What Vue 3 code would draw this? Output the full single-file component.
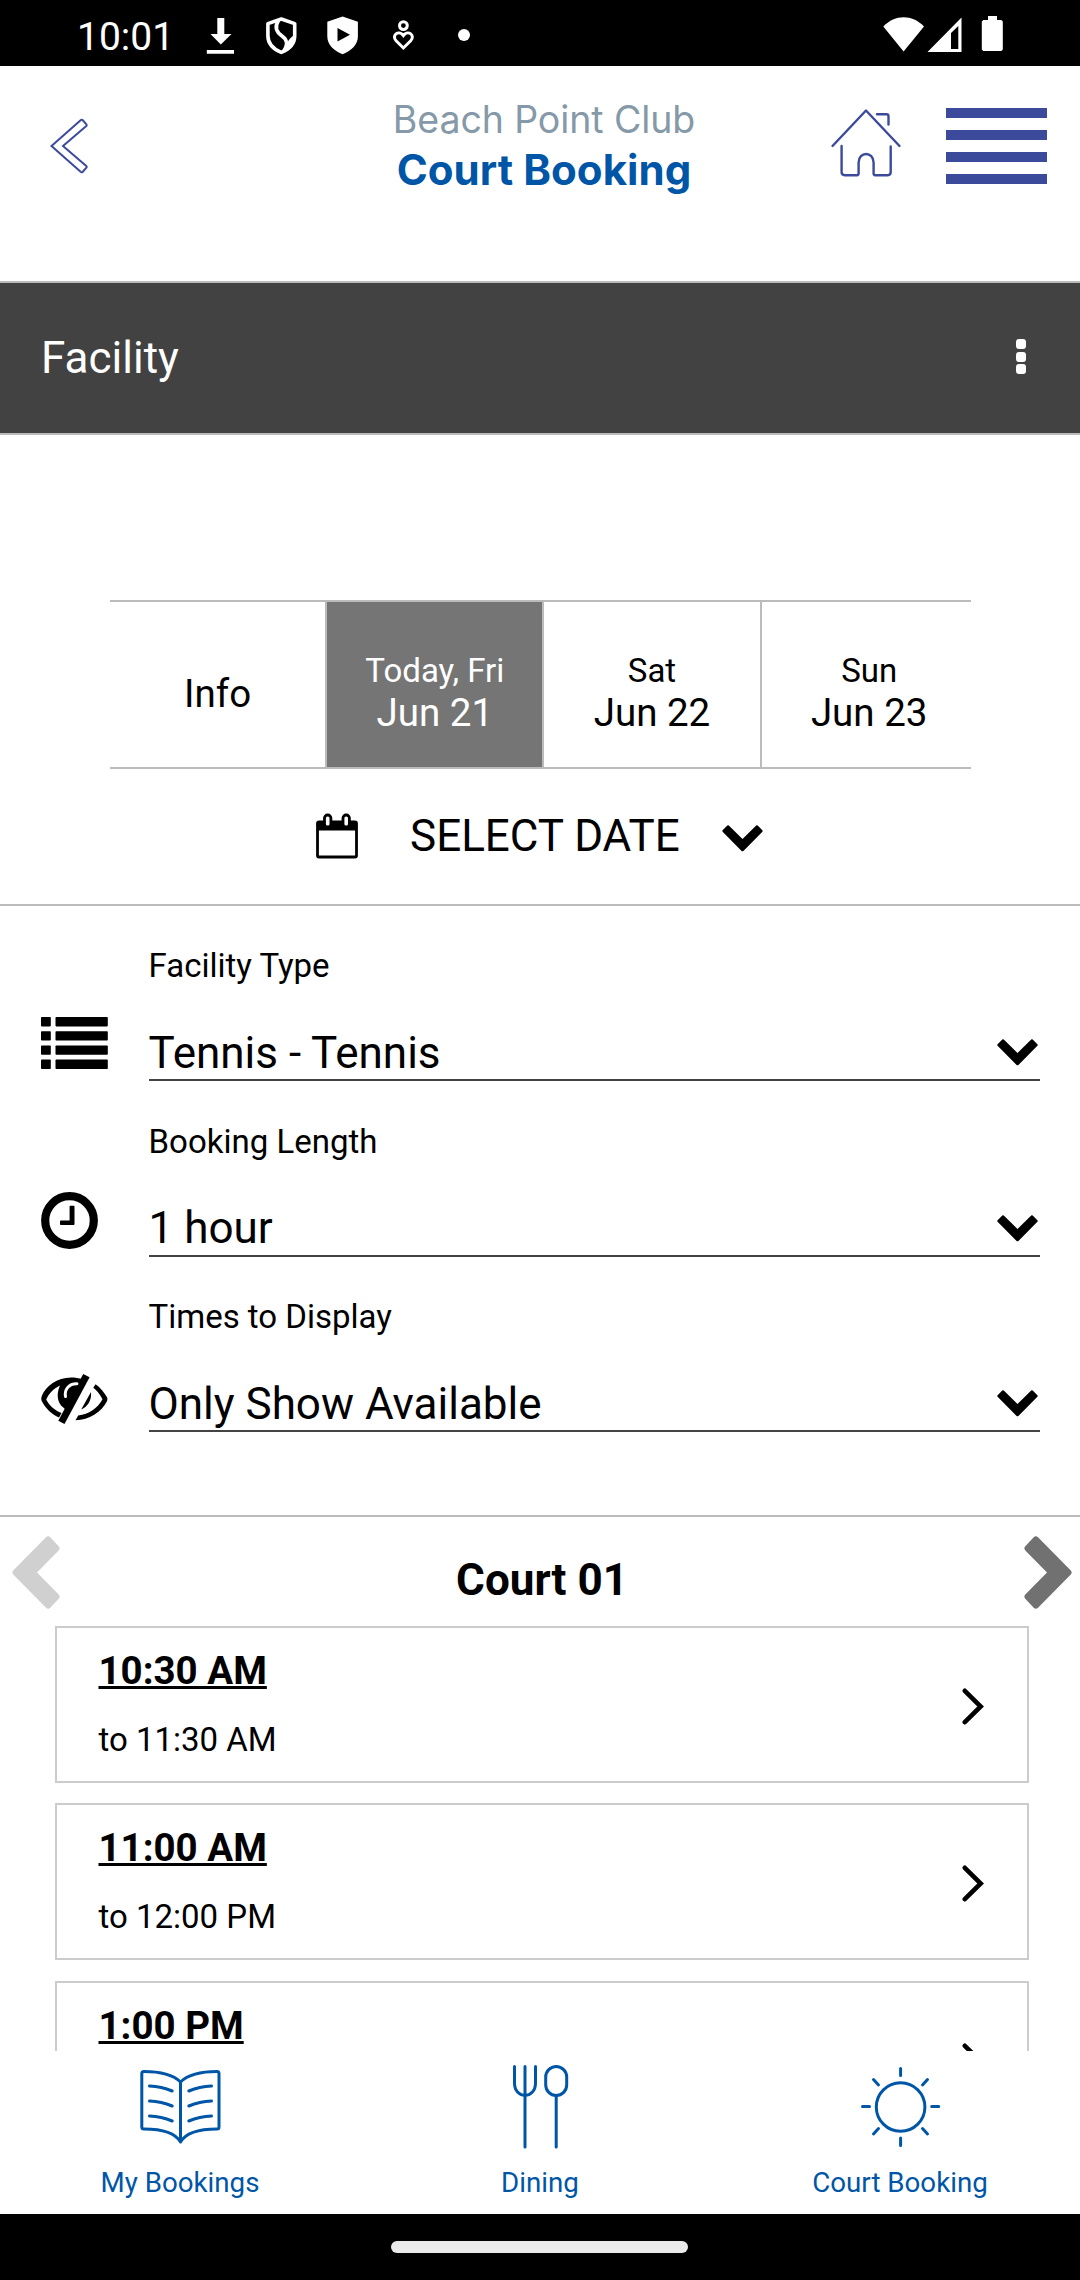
<template>
  <div class="phone">
    <div class="status">
      <span class="time">10:01</span>
      <svg class="status-left" width="280" height="66" viewBox="200 0 280 66" fill="#fff">
        <path d="M217.3 18h7v16h7.2l-10.7 10.4L210.5 34h6.8zM206.8 50h27.2v3.8h-27.2z" />
        <g fill="none" stroke="#fff" stroke-width="3.6" stroke-linejoin="round">
          <path d="M281.3 19l13.4 4.6v12.2c0 7.4-5.4 13.4-13.4 16.6-8-3.2-13.4-9.2-13.4-16.6V23.6z" />
          <path d="M278.5 20.500c-4.500 7-1.500 12 3.500 15.500 5 3.500 6.500 8 1.500 15.500M289.500 46.500c-1-4 .5-6 4.500-9" />
        </g>
        <path fill-rule="evenodd" d="M342.6 16.500l15.300 5.300v14.400c0 8-6 14.400-15.300 18-9.300-3.600-15.300-10-15.300-18V21.800zM337.500 28v13.500l12.500-6.800z" />
        <g fill="none" stroke="#fff" stroke-width="3">
          <circle cx="403.4" cy="25.6" r="3.9" />
          <path d="M403.4 48l-7.300-7.200c-5-5.300 2.500-11.300 7.300-5.300 4.800-6 12.300 0 7.300 5.300z" />
        </g>
        <circle cx="464" cy="35" r="6" />
      </svg>
      <svg class="status-right" width="125" height="66" viewBox="880 0 125 66" fill="#fff">
        <path d="M883.3 26.500c12-12.300 28.700-12.300 40.700 0L903.600 51.500z" />
        <path fill-rule="evenodd" d="M961.5 17.500V52h-34zM951 33v16h7.300V26z" />
        <path d="M988 16h9v4h4.300l1.500 1.500v28L1001.300 51h-18l-1.500-1.500v-28l1.500-1.500h4.700z" />
      </svg>
    </div>

    <header class="header">
      <svg class="back" width="40" height="58" viewBox="0 0 40 58">
        <path d="M2.500 29L31.600 3.300q1.200-1 2.200 0l3.400 3.800q1 1.200-.2 2.200L14 29l23 19.700q1.200 1 .2 2.200l-3.400 3.800q-1 1-2.200 0z" />
      </svg>
      <div class="titles">
        <div class="club">Beach Point Club</div>
        <div class="page-name">Court Booking</div>
      </div>
      <svg class="home" width="72" height="70" viewBox="0 0 72 70">
        <path d="M2.500 41.500L36 6l33.500 35.500M47 9.700h9.500q2 0 2 2V20M11.600 41.500v26q0 3.200 3.200 3.200H27q1.600 0 1.600-1.600v-11c0-11.500 15-11.500 15 0v11q0 1.600 1.600 1.600h12.500q3 0 3-3.200V42" transform="translate(0 -2.500)" />
      </svg>
      <div class="burger"><i v-for="n in 4" :key="n"></i></div>
    </header>

    <div class="facility">
      <span>Facility</span>
      <div class="dots"><i v-for="n in 3" :key="n"></i></div>
    </div>

    <section class="dates">
      <div class="tabs">
        <div v-for="tab in tabs" :key="tab.date" class="tab" :class="{ active: tab.active }">
          <span v-if="tab.day" class="day">{{ tab.day }}</span>
          <span class="date">{{ tab.date }}</span>
        </div>
      </div>
      <div class="select-date">
        <svg width="42" height="46" viewBox="0 0 42 46">
          <rect x="1.5" y="9" width="39" height="35" rx="1.5" fill="none" stroke="#000" stroke-width="2.8" />
          <path d="M1 9h40v8.500H1z" />
          <rect x="8.5" y="2" width="6.4" height="12" rx="3" fill="#fff" stroke="#000" stroke-width="2.8" />
          <rect x="27" y="2" width="6.4" height="12" rx="3" fill="#fff" stroke="#000" stroke-width="2.8" />
        </svg>
        <span>SELECT DATE</span>
        <svg class="select-chevron" width="41" height="27" viewBox="0 0 41 27"><path :d="chevron" /></svg>
      </div>
    </section>

    <section class="form">
      <div v-for="field in fields" :key="field.label" class="field">
        <div class="field-icon">
          <svg v-if="field.icon === 'list'" class="icon-list" width="67" height="52" viewBox="0 0 67 52">
            <template v-for="n in 4" :key="n">
              <rect x="0" :y="(n - 1) * 14.2" width="9.8" height="9.4" rx=".8" />
              <rect x="14.5" :y="(n - 1) * 14.2" width="52.3" height="9.4" rx=".8" />
            </template>
          </svg>
          <svg v-else-if="field.icon === 'clock'" class="icon-clock" width="57" height="57" viewBox="0 0 57 57">
            <circle cx="28.5" cy="28.5" r="24.3" fill="none" stroke="#000" stroke-width="8.2" />
            <path d="M28.6 14.500q0-.8.8-.8h3.300q.8 0 .8.800V32q0 1-1 1H19.800q-.8 0-.8-.8v-2.800q0-.8.800-.8h8.800z" />
          </svg>
          <svg v-else class="icon-eye" width="67" height="50" viewBox="0 0 67 50">
            <path d="M42 5.500C22-1 6 10 1 21.500q-1.500 3.500 0 6C5 35 11 40.500 18 43.500l2.500-4.500C14 36.500 8.500 32 5.200 25.500 8 19 13 14.500 19 11.500c-3 7-3.500 14 1 20l4 3.500z" />
            <path d="M42.200 0l6.400 3.200L23.500 50l-6.200-3.200z" />
            <path d="M36 9.700C27.500 9.500 23.200 16 24.500 22.500" fill="none" stroke="#fff" stroke-width="3" stroke-linecap="round" />
            <path d="M54.500 10.300C59 13.300 63 18 66 23.300q1 2 0 4C60 38.500 48.500 46 34.500 46.300l2.700-4.700C48 40.300 56.500 34.500 61.500 25.300 59 20.500 56 16.500 52.300 13.800zM50 18c.8 8-3 14.500-9.800 17.500z" />
          </svg>
        </div>
        <div class="field-body">
          <div class="label">{{ field.label }}</div>
          <div class="value">
            <span>{{ field.value }}</span>
            <svg width="41" height="27" viewBox="0 0 41 27"><path :d="chevron" /></svg>
          </div>
        </div>
      </div>
    </section>

    <section class="courts">
      <div class="court-head">
        <svg class="prev" width="48" height="73" viewBox="0 0 48 73"><path :d="arrow" transform="matrix(-1 0 0 1 48 0)" /></svg>
        <h2>Court 01</h2>
        <svg class="next" width="48" height="73" viewBox="0 0 48 73"><path :d="arrow" /></svg>
      </div>
      <div class="slots">
        <article v-for="slot in slots" :key="slot.start" class="slot">
          <div>
            <div class="start">{{ slot.start }}</div>
            <div v-if="slot.end" class="end">to {{ slot.end }}</div>
          </div>
          <svg width="22" height="37" viewBox="0 0 22 37">
            <path d="M2.800 2.800L18.700 18.500 2.800 34.200" fill="none" stroke="#000" stroke-width="4.6" stroke-linecap="round" />
          </svg>
        </article>
      </div>
    </section>

    <nav class="bottom-nav">
      <a class="nav-item">
        <svg width="84" height="90" viewBox="138 2063 84 90">
          <path d="M180.500 2142V2082C172 2074 157 2071.600 144 2071.600q-2.200 0-2.200 2.200V2127q0 2 2.200 2c17 0 31 3.500 36.500 13 5.500-9.500 19.500-13 36.500-13q2 0 2-2v-53.200q0-2.200-2-2.200c-13 0-28 2.400-36.500 10.400" />
          <path d="M149.500 2086q12 .5 22.700 5M149.500 2101q12 .5 22.700 5M149.500 2116q12 .5 22.700 5M211.500 2086q-12 .5-22.700 5M211.500 2101q-12 .5-22.700 5M211.500 2116q-12 .5-22.700 5" />
        </svg>
        <span>My Bookings</span>
      </a>
      <a class="nav-item">
        <svg width="84" height="90" viewBox="498 2063 84 90">
          <path d="M514.500 2066.500V2083c0 16.500 21 16.500 21 0v-16.500M525 2066.500V2147M556.200 2095.500V2147" />
          <rect x="545.7" y="2066.5" width="21" height="29" rx="10.5" />
        </svg>
        <span>Dining</span>
      </a>
      <a class="nav-item">
        <svg width="84" height="90" viewBox="858 2063 84 90">
          <circle cx="900.6" cy="2107" r="24.3" />
          <path d="M900.600 2068.500v7M900.600 2138v7.500M862.500 2106.500h7M931.700 2106.500h7M873.500 2079.500l5 5.500M927.500 2079.500l-5 5.500M873.500 2134l5-5.500M927.500 2134l-5-5.500" />
        </svg>
        <span>Court Booking</span>
      </a>
    </nav>

    <div class="gesture"><i></i></div>
  </div>
</template>

<script setup>
import { ref } from 'vue'

const chevron = 'M.6 6.800Q0 6 .6 5.300L5.300.6Q6 0 6.800.6L20.500 14 34.200.6Q35 0 35.700.6l4.700 4.700q.6.700 0 1.500L21.400 25.900q-.9.800-1.800 0z'
const arrow = 'M1.300 14.500Q-.6 12.300 1.300 10.200L9.700 1.300Q11.800-.6 14 1.300L46.800 34.500Q48.500 36.500 46.800 38.500L14 71.700Q11.800 73.600 9.700 71.700L1.300 62.800Q-.6 60.700 1.300 58.500L23 36.500z'

const tabs = ref([
  { date: 'Info' },
  { day: 'Today, Fri', date: 'Jun 21', active: true },
  { day: 'Sat', date: 'Jun 22' },
  { day: 'Sun', date: 'Jun 23' },
])

const fields = ref([
  { icon: 'list', label: 'Facility Type', value: 'Tennis - Tennis' },
  { icon: 'clock', label: 'Booking Length', value: '1 hour' },
  { icon: 'eye', label: 'Times to Display', value: 'Only Show Available' },
])

const slots = ref([
  { start: '10:30 AM', end: '11:30 AM' },
  { start: '11:00 AM', end: '12:00 PM' },
  { start: '1:00 PM' },
])
</script>

<style>
body { margin: 0; background: #fff; }
</style>

<style scoped>
.phone { width: 1080px; height: 2280px; display: flex; flex-direction: column; overflow: hidden; background: #fff; color: #000; font-family: Roboto, sans-serif; }
.phone > * { box-sizing: border-box; flex-shrink: 0; }
svg { display: block; flex-shrink: 0; }

.status { height: 66px; display: flex; align-items: center; padding-left: 77px; background: #000; color: #fff; }
.time { width: 123px; font-size: 39px; line-height: 46px; padding-top: 8px; }
.status-right { margin-left: 400px; }

.header { height: 215px; display: flex; align-items: flex-start; }
.back { margin: 51px 0 0 49px; fill: none; stroke: #3c4a9c; stroke-width: 2; }
.titles { width: 310px; margin: 29px 0 0 300px; display: flex; flex-direction: column; align-items: center; white-space: nowrap; font-family: Inter, sans-serif; line-height: 50px; }
.club { font-size: 37.5px; letter-spacing: -.1px; color: #8599a8; }
.page-name { font-size: 42px; font-weight: 700; letter-spacing: .05px; color: #0056a6; }
.home { margin: 41px 0 0 131px; fill: none; stroke: #3c4a9c; stroke-width: 2.4; stroke-linecap: round; stroke-linejoin: round; }
.burger { width: 101px; margin: 42px 0 0 44px; display: grid; gap: 12px; }
.burger i { height: 10px; background: #3c4a9c; }

.facility { height: 154px; display: flex; align-items: center; justify-content: space-between; padding: 0 54px 0 41px; background: #424242; color: #fff; border-top: 2px solid #bbb; border-bottom: 2px solid #bbb; font-size: 44px; }
.dots { display: grid; gap: 2.5px; margin-bottom: 3px; }
.dots i { width: 10px; height: 10px; border-radius: 3px; background: #fff; }

.dates { height: 471px; padding-top: 165px; border-bottom: 2px solid #bbb; }
.tabs { width: 861px; height: 169px; box-sizing: border-box; margin-left: 110px; display: flex; overflow: hidden; border-top: 2px solid #bbb; border-bottom: 2px solid #bbb; }
.tab { flex: 0 0 217.2px; box-sizing: border-box; display: flex; flex-direction: column; align-items: center; justify-content: center; padding-top: 18px; border-right: 2px solid #bbb; }
.tab.active { background: #757575; color: #fff; }
.day { font-size: 33px; line-height: 39px; margin-top: -2px; }
.date { font-size: 38.5px; line-height: 45px; }
.select-date { height: 134px; display: flex; align-items: center; padding-left: 316px; font-size: 44px; }
.select-date span { width: 312px; margin-left: 52px; }
.select-chevron { margin-top: 4px; }

.form { height: 611px; padding-top: 40px; border-bottom: 2px solid #bbb; }
.field { height: 175.5px; display: flex; }
.field-icon { width: 148.5px; box-sizing: border-box; padding: 71px 0 0 41px; }
.icon-eye { margin-top: 6px; }
.icon-clock { margin-top: -1px; }
.field-body { width: 891.5px; }
.label { font-size: 33px; line-height: 39px; margin-bottom: 41px; }
.value { height: 53px; display: flex; align-items: center; justify-content: space-between; padding-right: 2px; border-bottom: 2px solid #444; font-size: 44px; line-height: 52px; }

.courts { height: 534px; overflow: hidden; }
.court-head { height: 109px; display: flex; align-items: flex-start; justify-content: space-between; padding: 19px 8px 0 12px; box-sizing: border-box; }
.prev { fill: #d0d0d0; }
.next { fill: #717171; }
h2 { margin: 18px 0 0; font-size: 44px; line-height: 52px; font-weight: 700; }
.slots { display: grid; gap: 20.4px; padding: 0 51px 0 55px; }
.slot { height: 157px; box-sizing: border-box; display: flex; justify-content: space-between; padding: 20px 43px 0 41.5px; border: 2px solid #ccc; }
.slot svg { margin-top: 40px; }
.start { font-size: 38.5px; line-height: 45px; font-weight: 700; text-decoration: underline; }
.end { font-size: 33px; line-height: 39px; margin-top: 27px; }

.bottom-nav { height: 163px; display: flex; background: #fff; }
.nav-item { flex: 1; display: flex; flex-direction: column; align-items: center; padding-top: 12px; color: #0056a6; font-size: 27.7px; line-height: 32px; }
.nav-item svg { fill: none; stroke: #0056a6; stroke-width: 3; stroke-linecap: round; stroke-linejoin: round; margin-bottom: 14px; }

.gesture { flex: 1; display: flex; justify-content: center; padding: 27px 1px 0 0; background: #000; }
.gesture i { width: 297px; height: 12px; border-radius: 6px; background: #eaeaea; }
</style>
